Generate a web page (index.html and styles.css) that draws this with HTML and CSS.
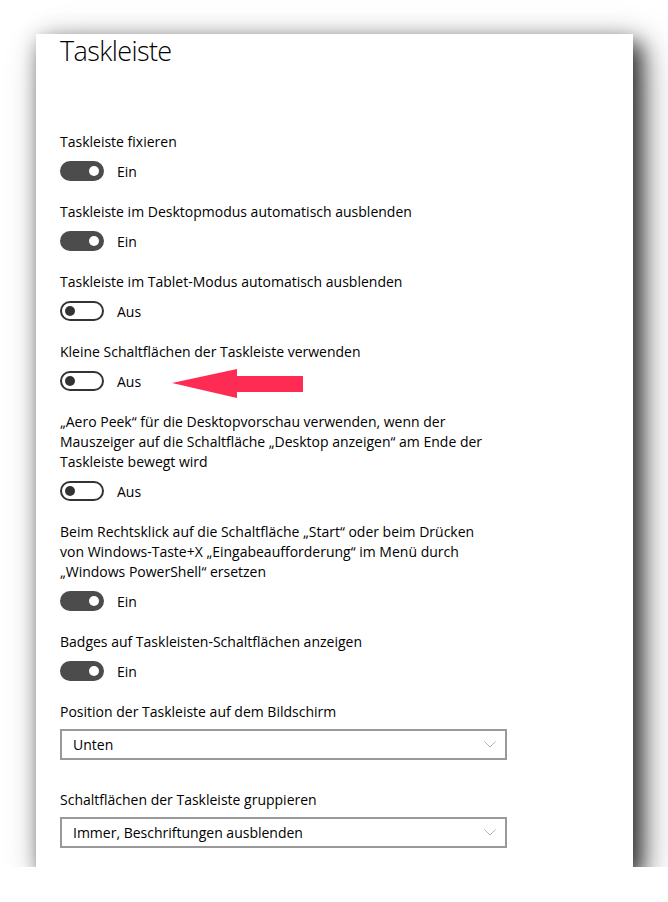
FILE: index.html
```html
<!DOCTYPE html>
<html lang="de">
<head>
    <meta charset="UTF-8">
    <meta name="viewport" content="width=device-width, initial-scale=1.0">
    <link rel="stylesheet" href="styles.css">
</head>
<body>
    <div class="card">
        <h1 class="title">Taskleiste</h1>

        <div class="setting">
            <div class="label">Taskleiste fixieren</div>
            <div class="toggle-row"><span class="toggle on"></span><span class="state">Ein</span></div>
        </div>

        <div class="setting">
            <div class="label">Taskleiste im Desktopmodus automatisch ausblenden</div>
            <div class="toggle-row"><span class="toggle on"></span><span class="state">Ein</span></div>
        </div>

        <div class="setting">
            <div class="label">Taskleiste im Tablet-Modus automatisch ausblenden</div>
            <div class="toggle-row"><span class="toggle"></span><span class="state">Aus</span></div>
        </div>

        <div class="setting">
            <div class="label">Kleine Schaltflächen der Taskleiste verwenden</div>
            <div class="toggle-row"><span class="toggle"></span><span class="state">Aus</span></div>
        </div>

        <div class="setting">
            <div class="label">„Aero Peek“ für die Desktopvorschau verwenden, wenn der<br>Mauszeiger auf die Schaltfläche „Desktop anzeigen“ am Ende der<br>Taskleiste bewegt wird</div>
            <div class="toggle-row"><span class="toggle"></span><span class="state">Aus</span></div>
        </div>

        <div class="setting">
            <div class="label">Beim Rechtsklick auf die Schaltfläche „Start“ oder beim Drücken<br>von Windows-Taste+X „Eingabeaufforderung“ im Menü durch<br>„Windows PowerShell“ ersetzen</div>
            <div class="toggle-row"><span class="toggle on"></span><span class="state">Ein</span></div>
        </div>

        <div class="setting">
            <div class="label">Badges auf Taskleisten-Schaltflächen anzeigen</div>
            <div class="toggle-row"><span class="toggle on"></span><span class="state">Ein</span></div>
        </div>

        <div class="setting select-setting">
            <div class="label">Position der Taskleiste auf dem Bildschirm</div>
            <div class="select">
                <span>Unten</span>
                <svg class="chevron" width="12" height="7" viewBox="0 0 12 7"><polyline points="0.5,0.5 6,6 11.5,0.5" fill="none" stroke="#b4b4b4" stroke-width="1"/></svg>
            </div>
        </div>

        <div class="setting select-setting">
            <div class="label">Schaltflächen der Taskleiste gruppieren</div>
            <div class="select">
                <span>Immer, Beschriftungen ausblenden</span>
                <svg class="chevron" width="12" height="7" viewBox="0 0 12 7"><polyline points="0.5,0.5 6,6 11.5,0.5" fill="none" stroke="#b4b4b4" stroke-width="1"/></svg>
            </div>
        </div>

        <!-- red marker arrow -->
        <svg class="arrow" width="132" height="31" viewBox="0 0 132 31">
            <polygon points="0,15 65,1 65,8 131,8 131,24 65,24 65,30" fill="#fe2c55"/>
        </svg>
    </div>
</body>
</html>
```

FILE: styles.css
```css
body {
    margin: 0;
    padding: 0;
    background-color: #ffffff;
    font-family: "Open Sans", "Noto Sans", sans-serif;
    color: #000;
}

.card {
    position: relative;
    box-sizing: border-box;
    width: 597px;
    margin: 34px 0 0 36px;
    padding: 0 24px 19px 24px;
    background-color: #fff;
    box-shadow: 8px 10px 20px rgba(0, 0, 0, 0.75),
                12px 14px 40px rgba(0, 0, 0, 0.3),
                0 0 22px rgba(0, 0, 0, 0.1);
}

.title {
    margin: 0 0 63px 0;
    font-size: 27px;
    font-weight: 300;
    line-height: 34px;
    letter-spacing: -0.6px;
}

.setting {
    margin-bottom: 20px;
}

.label {
    font-size: 14px;
    line-height: 20px;
    padding-top: 1px;
    margin-bottom: -1px;
}

.toggle-row {
    display: flex;
    align-items: center;
    margin-top: 10px;
    height: 20px;
}

.toggle {
    position: relative;
    box-sizing: border-box;
    width: 44px;
    height: 20px;
    border: 2px solid #333;
    border-radius: 10px;
    background-color: #fff;
}

.toggle::after {
    content: "";
    position: absolute;
    top: 3px;
    left: 3px;
    width: 10px;
    height: 10px;
    border-radius: 50%;
    background-color: #333;
}

.toggle.on {
    border-color: #4c4c4c;
    background-color: #4c4c4c;
}

.toggle.on::after {
    left: auto;
    right: 3px;
    background-color: #fff;
}

.state {
    margin-left: 13px;
    font-size: 14px;
}

.select-setting .label {
    margin-bottom: 7px;
}

.select-setting {
    margin-bottom: 29px;
}

.select-setting:last-of-type {
    margin-bottom: 0;
}

.select {
    box-sizing: border-box;
    display: flex;
    align-items: center;
    justify-content: space-between;
    width: 447px;
    height: 31px;
    padding: 0 9px 0 11px;
    border: 2px solid #999;
    font-size: 14px;
}

.arrow {
    position: absolute;
    left: 136px;
    top: 334px;
}
```
